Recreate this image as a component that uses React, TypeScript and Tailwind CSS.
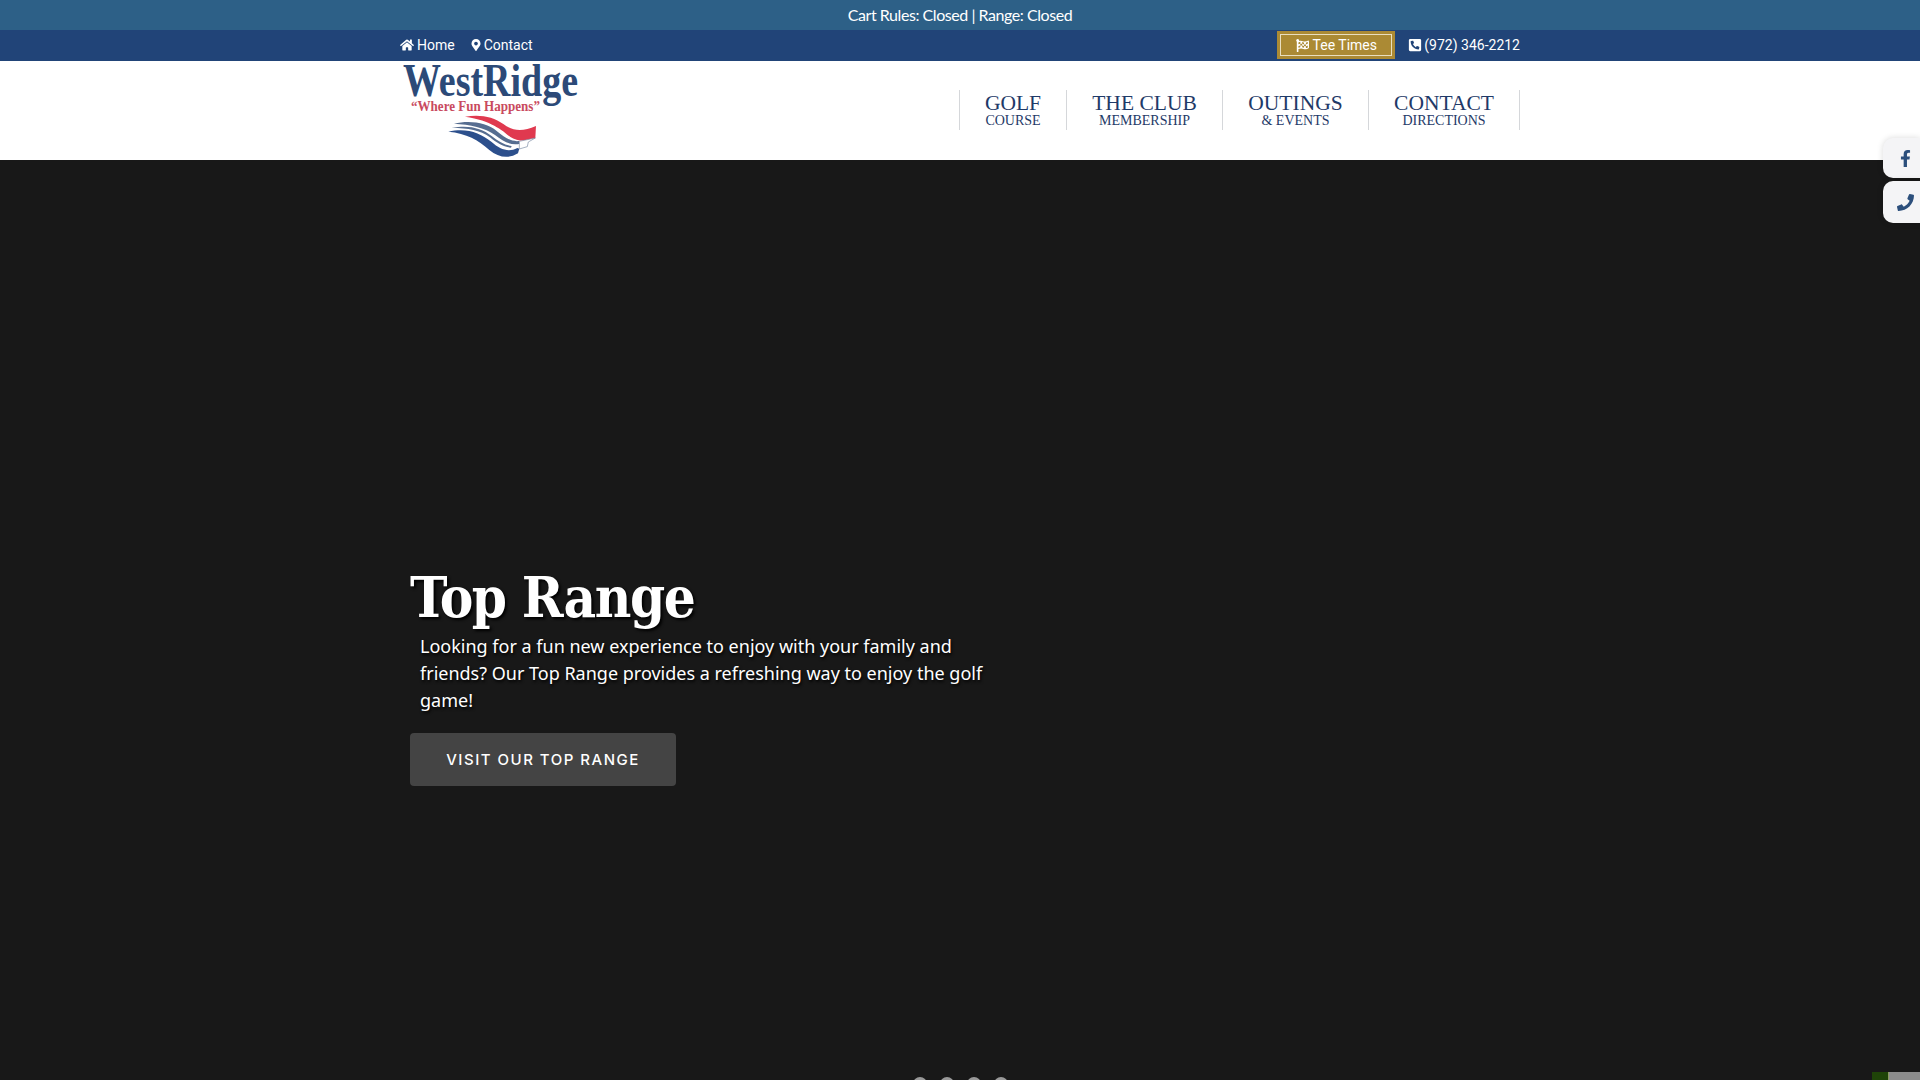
import { FaHome, FaMapMarkerAlt, FaPhoneSquareAlt, FaFacebookF, FaPhone, FaFlagCheckered } from 'react-icons/fa';

// Main nav items
const navItems = [
  { title: 'GOLF', sub: 'COURSE', width: 'w-[107px]' },
  { title: 'THE CLUB', sub: 'MEMBERSHIP', width: 'w-[156px]' },
  { title: 'OUTINGS', sub: '& EVENTS', width: 'w-[146px]' },
  { title: 'CONTACT', sub: 'DIRECTIONS', width: 'w-[151px]' },
];

function Logo() {
  return (
    <svg width="180" height="99" viewBox="0 0 180 99" className="block overflow-visible">
      <text x="0" y="35" fontFamily="'Liberation Serif', serif" fontWeight="700" fontSize="47" fill="#2c4a78" textLength="175" lengthAdjust="spacingAndGlyphs">
        WestRidge
      </text>
      <text x="8" y="50" fontFamily="'Liberation Serif', serif" fontWeight="700" fontSize="15" fill="#c94a5e" textLength="129" lengthAdjust="spacingAndGlyphs">
        “Where Fun Happens”
      </text>
      {/* flag, drawn in 3x crop coordinates */}
      <g transform="translate(-23,-61) scale(0.3333)">
        <path d="M255 350 C300 342 340 350 370 372 C395 392 425 398 468 378 L466 415 C440 425 412 424 390 410 C365 390 335 362 255 350 Z" fill="#e0394f" />
        <path d="M222 371 C270 360 320 368 350 393 C375 414 395 426 418 423 L420 431 C395 438 370 425 345 405 C315 382 270 374 222 371 Z" fill="#566d90" />
        <path d="M215 384 C265 374 305 384 335 408 C355 424 375 436 395 438 L393 443 C370 442 350 428 330 412 C300 390 265 384 215 384 Z" fill="#566d90" />
        <path d="M205 395 C260 383 300 398 335 426 C360 448 385 458 412 444 L418 446 L414 460 C385 478 355 472 328 450 C295 420 260 400 205 395 Z" fill="#2c4f8c" />
        <path d="M418 424 L466 414 L445 426 L442 440 L418 447 Z" fill="#ffffff" stroke="#7a8ba3" strokeWidth="2" />
      </g>
    </svg>
  );
}

export default function App() {
  return (
    <div className="relative h-[1080px] overflow-hidden bg-[#181818] font-['Roboto',sans-serif]">
      {/* status bar */}
      <div className="flex h-[30px] items-center justify-center bg-[#2d6087] font-['Lato',sans-serif] text-[16px] tracking-[-0.45px] text-white">
        Cart Rules: Closed | Range: Closed
      </div>

      {/* utility bar */}
      <div className="h-[31px] bg-[#214478] pb-[1px] text-[14px] text-white">
        <div className="mx-auto flex h-full w-[1120px] items-center justify-between">
          <div className="flex items-center gap-[15px]">
            <span className="flex items-center gap-[3px]"><FaHome className="text-[14px]" /> Home</span>
            <span className="flex items-center gap-[2px]"><FaMapMarkerAlt className="text-[12px]" /> Contact</span>
          </div>
          <div className="flex items-center gap-[13px]">
            <div className="flex h-[28px] w-[118px] items-center justify-center bg-[#ab8a34] outline-1 -outline-offset-4 outline-[#e9dfc0]">
              <span className="flex items-center gap-[4px]"><FaFlagCheckered className="text-[13px]" /> Tee Times</span>
            </div>
            <span className="flex items-center gap-[2px]"><FaPhoneSquareAlt className="text-[14px]" /> (972) 346-2212</span>
          </div>
        </div>
      </div>

      {/* header */}
      <header className="h-[99px] bg-white">
        <div className="mx-auto flex h-full w-[1120px] items-center justify-between">
          <div className="pl-[3px]"><Logo /></div>
          <nav className="mb-[2px] flex items-center border-r border-[#d5d7da] font-['Liberation_Serif',serif] text-[#1f3a68]">
            {navItems.map((item) => (
              <a key={item.title} className={`flex h-[40px] flex-col items-center justify-center border-l border-[#d5d7da] ${item.width}`}>
                <span className="text-[21.5px] leading-[22px]">{item.title}</span>
                <span className="text-[14px] leading-[14px]">{item.sub}</span>
              </a>
            ))}
          </nav>
        </div>
      </header>

      {/* hero */}
      <section className="relative h-[920px] bg-[#181818]">
        <div className="mx-auto w-[1120px] pl-[10px] pt-[402px]">
          <h1 className="font-['DejaVu_Serif_Condensed','DejaVu_Serif',serif] text-[56px] font-bold leading-[71px] tracking-[-1.4px] text-white [text-shadow:2px_2px_3px_#000]">
            Top Range
          </h1>
          <p className="w-[580px] pl-[10px] font-['Noto_Sans',sans-serif] text-[18px] leading-[27px] text-white [text-shadow:1px_2px_3px_#000]">
            Looking for a fun new experience to enjoy with your family and friends? Our Top Range provides a refreshing way to enjoy the golf game!
          </p>
          <a className="mt-[19px] flex h-[53px] w-[266px] items-center justify-center rounded-[4px] bg-[#444444] pt-[1px] font-['Inter',sans-serif] text-[15px] font-medium tracking-[1.5px] text-white">
            VISIT OUR TOP RANGE
          </a>
        </div>

        {/* slider dots */}
        <div className="absolute left-[913px] top-[917px] flex gap-[13px]">
          <span className="h-[14px] w-[14px] rounded-full bg-[#999999]" />
          <span className="h-[14px] w-[14px] rounded-full bg-[#999999]" />
          <span className="h-[14px] w-[14px] rounded-full bg-[#999999]" />
          <span className="h-[14px] w-[14px] rounded-full bg-[#999999]" />
        </div>

        {/* corner widget */}
        <div className="absolute right-0 top-[912px] flex h-[8px]">
          <span className="w-[16px] bg-[#1f4408]" />
          <span className="w-[1px] bg-[#8a9a60]" />
          <span className="w-[31px] bg-[#8c8c8c]" />
        </div>
      </section>

      {/* side tabs */}
      <div className="absolute right-0 top-[138px] flex flex-col gap-[3px] text-[#2c4f7c]">
        <span className="flex h-[40px] w-[37px] items-center justify-center rounded-l-[10px] bg-[#f4f4f6] pl-[8px] text-[17px] shadow-[0_0_6px_rgba(0,0,0,0.15)]"><FaFacebookF /></span>
        <span className="flex h-[42px] w-[37px] items-center justify-center rounded-l-[10px] bg-[#f4f4f6] pl-[8px] text-[17px] shadow-[0_0_6px_rgba(0,0,0,0.15)]"><FaPhone /></span>
      </div>
    </div>
  );
}
